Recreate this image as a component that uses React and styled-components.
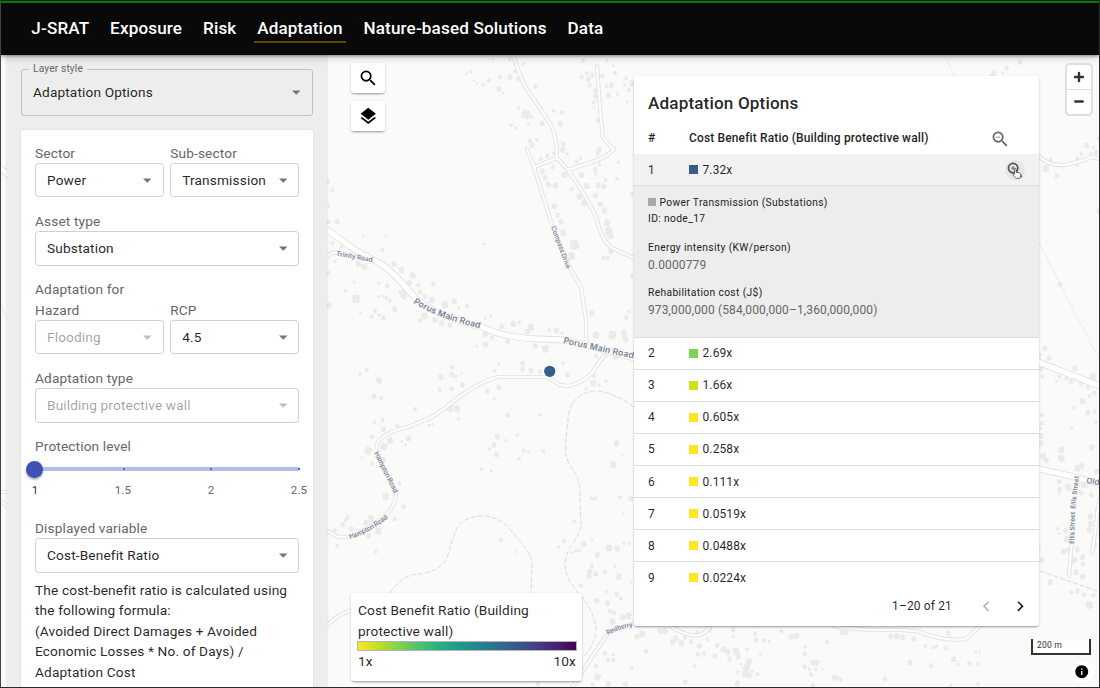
import React from "react";
import styled, { createGlobalStyle, css } from "styled-components";
import {
  MdSearch,
  MdLayers,
  MdZoomOut,
  MdZoomIn,
  MdChevronLeft,
  MdChevronRight,
  MdArrowDropDown,
  MdInfo,
} from "react-icons/md";

const GlobalStyle = createGlobalStyle`
  *, *::before, *::after { box-sizing: border-box; }
  body {
    margin: 0;
    font-family: Roboto, "Liberation Sans", sans-serif;
    font-size: 13.67px;
    line-height: 20.5px;
    letter-spacing: 0.14px;
    color: rgba(0, 0, 0, 0.87);
    overflow: hidden;
  }
`;

/* ---------- Shell ---------- */

const Shell = styled.div`
  width: 1100px;
  height: 688px;
  display: flex;
  flex-direction: column;
  overflow: hidden;
  border: 1px solid #2b2b2b;
  border-left-color: #444;
  border-top-color: #0a1a0a;
`;

const Header = styled.header`
  position: relative;
  z-index: 3;
  flex: none;
  height: 54px;
  border-top: 2px solid #007c05;
  background: #090909;
  box-shadow: 0 1px 3px rgba(0, 0, 0, 0.4), 0 3px 8px rgba(0, 0, 0, 0.16);
  display: flex;
  align-items: center;
  gap: 14.8px;
  padding: 0 27.3px 1.5px;
`;

const NavLink = styled.a`
  padding: 2px 3px 0;
  border-bottom: 2px solid ${(p) => (p.$active ? "#594800" : "transparent")};
  color: #fff;
  font-size: 17.09px;
  line-height: 25px;
  font-weight: 500;
  letter-spacing: 0.155px;
  white-space: nowrap;
`;

const Main = styled.main`
  position: relative;
  flex: 1;
  min-height: 0;
  display: flex;
  background: #fafaf9;
`;

const MapCanvas = styled.svg`
  position: absolute;
  left: -1px;
  top: -55px;
`;

/* ---------- Sidebar ---------- */

const Sidebar = styled.aside`
  position: relative;
  flex: none;
  width: 320px;
  margin-left: 6px;
  padding: 7px 14px 0;
  background: #ededed;
  box-shadow: 0 0 2px rgba(0, 0, 0, 0.16);
  display: flex;
  flex-direction: column;
  gap: 14px;
`;

const StyleSelect = styled.fieldset`
  height: 54px;
  flex: none;
  margin: 0;
  padding: 0 11px;
  min-width: 0;
  border: 1px solid #c1c1c1;
  border-radius: 3px;
  display: flex;
`;

const StyleLegend = styled.legend`
  padding: 0 4px;
  margin-left: -4px;
  font-size: 10.25px;
  line-height: 14px;
  letter-spacing: 0.12px;
  color: #666;
`;

const StyleValue = styled.div`
  display: flex;
  align-items: center;
  justify-content: space-between;
  width: 100%;
  height: 34px;
  margin-top: -1px;

  svg {
    margin-right: -5.5px;
    color: #757575;
  }
`;

const Card = styled.section`
  flex: 1;
  min-height: 0;
  padding: 12.7px 14px;
  border-radius: 3px 3px 0 0;
  background: #fff;
  box-shadow: 0 0 2px rgba(0, 0, 0, 0.12);
  display: flex;
  flex-direction: column;
  gap: 13.4px;
`;

const FieldRow = styled.div`
  display: grid;
  grid-template-columns: 1fr 1fr;
  gap: 6.5px;
`;

const Field = styled.div`
  display: flex;
  flex-direction: column;
`;

const Label = styled.div`
  color: #666;
  white-space: nowrap;
`;

const SelectBox = styled.div`
  display: flex;
  align-items: center;
  justify-content: space-between;
  height: 34.3px;
  padding: 0 5px 0 11px;
  border: 1px solid #d0d0d0;
  border-radius: 3.5px;
  color: ${(p) => (p.$disabled ? "rgba(0,0,0,0.38)" : "rgba(0,0,0,0.87)")};
  white-space: nowrap;

  svg {
    color: ${(p) => (p.$disabled ? "#bdbdbd" : "#757575")};
  }
`;

const SliderBlock = styled.div`
  height: 48px;
  padding-top: 10.9px;
`;

const Rail = styled.div`
  position: relative;
  width: 265px;
  height: 4px;
  border-radius: 2px;
  background: #b2bee4;
  display: flex;
  justify-content: space-between;
  align-items: center;
`;

const Tick = styled.span`
  width: 2px;
  height: 2px;
  border-radius: 1px;
  background: #3a4f9f;
`;

const Thumb = styled.span`
  position: absolute;
  left: -9px;
  top: -6.5px;
  width: 17.4px;
  height: 17.4px;
  border-radius: 50%;
  background: #3f51b5;
  box-shadow: 0 2px 2px rgba(0, 0, 0, 0.22), 0 1px 3px rgba(0, 0, 0, 0.15);
`;

const TickLabels = styled.div`
  display: flex;
  justify-content: space-between;
  width: 288px;
  margin: 11px 0 0 -12px;
  font-size: 11.5px;
  line-height: 17px;
  color: #666;

  span {
    width: 24px;
    text-align: center;
  }
  span:first-child {
    color: rgba(0, 0, 0, 0.87);
  }
`;

const Formula = styled.p`
  margin: 7px -10px 0 0;
  letter-spacing: 0.15px;
`;

/* ---------- Map overlays ---------- */

const floating = css`
  background: #fff;
  border-radius: 3px;
  box-shadow: 0 2px 2px -1px rgba(0, 0, 0, 0.26), 0 1px 3px rgba(0, 0, 0, 0.18);
`;

const LeftColumn = styled.div`
  position: relative;
  width: 231px;
  margin-left: 24px;
  padding: 8px 0 6.5px;
  display: flex;
  flex-direction: column;
  gap: 8px;
`;

const MapButton = styled.button`
  ${floating}
  width: 34px;
  height: 30px;
  padding: 0;
  border: 0;
  display: grid;
  place-items: center;
  color: #000;
`;

const Legend = styled.div`
  ${floating}
  margin-top: auto;
  height: 87.5px;
  padding: 7px 6px 6px 7px;
  letter-spacing: 0.16px;
`;

const Ramp = styled.div`
  height: 10px;
  width: 220px;
  margin: 0 0 0 -1px;
  border: 1px solid #b3b3b8;
  background: linear-gradient(
    90deg,
    #fde725,
    #c2df23 9%,
    #86d549 18%,
    #52c569 27%,
    #2ab07f 37%,
    #1e9b8a 46%,
    #25858e 55%,
    #2d708e 64%,
    #38588c 73%,
    #433e85 82%,
    #482173 91%,
    #440154
  );
`;

const RampLabels = styled.div`
  display: flex;
  justify-content: space-between;
`;

const Panel = styled.section`
  ${floating}
  position: relative;
  width: 405px;
  height: 549.5px;
  margin: 21px 0 0 52px;
  display: flex;
  flex-direction: column;
  font-size: 11.96px;
  letter-spacing: 0.14px;
`;

const PanelTitle = styled.h2`
  margin: 0;
  padding: 16.5px 14px 0;
  font-size: 17.09px;
  line-height: 20px;
  font-weight: 500;
  letter-spacing: 0.16px;
`;

const cells = css`
  flex: none;
  display: grid;
  grid-template-columns: 41px 1fr auto;
  align-items: center;
  padding: 1px 14px 0;
`;

const HeadRow = styled.div`
  ${cells}
  height: 41px;
  padding-right: 28.5px;
  padding-top: 11px;
  font-weight: 500;
  letter-spacing: 0.16px;
  color: #1f1f1f;

  svg {
    color: #666;
    margin-top: 2px;
  }
`;

const Row = styled.div`
  ${cells}
  height: ${(p) => (p.$active ? "32.5px" : "32.07px")};
  border-bottom: 1px solid ${(p) => (p.$last ? "transparent" : "#dedede")};
  background: ${(p) => (p.$active ? "#f2f2f2" : "transparent")};
`;

const Value = styled.div`
  display: flex;
  align-items: center;
  gap: 4.5px;
`;

const Swatch = styled.span`
  width: ${(p) => p.$size || 9}px;
  height: ${(p) => p.$size || 9}px;
  margin-bottom: 1px;
  background: ${(p) => p.$color};
`;

const HoverButton = styled.span`
  position: relative;
  width: 20.5px;
  height: 20.5px;
  border-radius: 50%;
  background: #e6e6e6;
  display: grid;
  place-items: center;
  color: #555;
`;

const Pointer = styled.svg`
  position: absolute;
  left: 7px;
  top: 8px;
`;

const Details = styled.div`
  flex: none;
  height: 151.5px;
  padding: 8.5px 14px;
  background: #ededed;
  border-bottom: 1px solid #dedede;
  font-size: 10.25px;
  line-height: 16.8px;
  letter-spacing: 0.36px;
`;

const DetailLine = styled.div`
  display: flex;
  align-items: center;
  gap: 3.5px;
  color: #222;
`;

const Measure = styled.div`
  margin-top: ${(p) => p.$gap || "12px"};
  color: #222;

  p {
    margin: 0;
    font-size: 11.96px;
    line-height: 17.5px;
    color: #666;
    letter-spacing: 0.15px;
  }
`;

const Pager = styled.div`
  flex: 1;
  display: flex;
  align-items: center;
  justify-content: flex-end;
  gap: 13.5px;
  padding: 0 8.5px 8px 0;

  span {
    margin-right: 10.5px;
    letter-spacing: 0.16px;
  }
`;

const RightColumn = styled.div`
  position: relative;
  flex: 1;
  display: flex;
  flex-direction: column;
  align-items: flex-end;
  padding: 7.5px 6.5px 1px 0;
`;

const ZoomControl = styled.div`
  width: 28px;
  height: 53px;
  border: 2px solid #dfdfdf;
  border-radius: 4.5px;
  background: #fff;
  display: flex;
  flex-direction: column;

  svg + svg {
    border-top: 1px solid #ddd;
  }
`;

const ScaleBar = styled.div`
  width: 60px;
  height: 16px;
  margin: auto 1.5px 6px -20px;
  border: 2px solid #333;
  border-top: 0;
  background: rgba(255, 255, 255, 0.75);
  padding: 0 0 0 4px;
  font-size: 8.6px;
  line-height: 13px;
  color: #333;
`;

const InfoButton = styled.div`
  width: 22px;
  height: 22px;
  margin-bottom: 3px;
  border-radius: 50%;
  background: #fff;
  display: grid;
  place-items: center;
  color: #000;
`;

/* ---------- Map drawing ---------- */

/* Every sheet holds footprints as x, y, size triples in thirds of a pixel. */
const sheets = [
  {
    x: 325,
    y: 55,
    b: [
      425, 56, 6, 437, 50, 8, 447, 76, 6, 456, 84, 6, 474, 90, 9, 492, 76, 11, 526, 66, 12, 522, 102, 13, 533, 113, 6, 555, 66, 13,
      570, 48, 11, 580, 72, 11, 594, 28, 9, 632, 94, 12, 555, 14, 8, 505, 13, 5, 580, 158, 8, 602, 178, 24, 618, 185, 10, 610, 206, 7,
      558, 211, 9, 572, 219, 7, 652, 206, 13, 686, 168, 9, 711, 172, 10, 705, 206, 14, 615, 258, 12, 622, 272, 14, 635, 254, 9,
      715, 267, 11, 713, 284, 16, 727, 297, 8, 687, 295, 9, 667, 303, 10, 647, 312, 10, 684, 337, 10, 756, 320, 10, 767, 309, 8,
      822, 285, 14, 818, 297, 10, 880, 322, 9, 824, 328, 8, 811, 344, 13, 812, 358, 8, 770, 360, 13, 718, 360, 16, 652, 349, 13,
      661, 368, 12, 670, 388, 15, 692, 392, 15, 741, 402, 11, 785, 393, 15, 820, 392, 14, 837, 395, 14, 842, 374, 9, 876, 371, 10,
      920, 418, 11, 764, 425, 16, 778, 444, 16, 811, 422, 14, 826, 448, 14, 838, 467, 15, 847, 503, 18, 850, 528, 20, 856, 540, 20,
      688, 454, 14, 698, 481, 12, 708, 500, 14, 715, 533, 17, 750, 570, 22, 774, 17, 10, 846, 17, 8, 770, 66, 11, 786, 54, 9, 790, 73, 13,
      801, 60, 11, 794, 90, 10, 811, 107, 12, 811, 124, 11, 806, 142, 9, 807, 157, 7, 818, 197, 10, 844, 94, 9, 859, 90, 13, 850, 121, 13,
      878, 118, 8, 832, 64, 10, 870, 54, 10, 903, 70, 9, 899, 90, 8, 912, 104, 11, 920, 85, 15, 906, 141, 6, 10, 379, 10, 22, 406, 9,
      11, 454, 7, 10, 500, 11, 37, 500, 13, 115, 543, 7, 182, 543, 6, 477, 567, 6, 866, 32, 7,
    ],
  },
  {
    x: 325,
    y: 240,
    b: [
      30, 65, 8, 10, 98, 10, 12, 197, 14, 87, 126, 6, 61, 153, 8, 93, 176, 22, 118, 80, 17, 100, 72, 15, 106, 218, 7, 140, 230, 11,
      150, 212, 10, 176, 234, 13, 162, 225, 8, 209, 208, 14, 195, 183, 9, 184, 173, 9, 174, 168, 6, 161, 170, 6, 162, 129, 7, 187, 138, 12,
      207, 72, 13, 230, 90, 15, 263, 106, 16, 253, 128, 13, 280, 136, 10, 232, 160, 20, 238, 172, 12, 325, 131, 11, 285, 156, 12,
      300, 170, 10, 320, 180, 16, 360, 195, 18, 388, 184, 14, 402, 203, 8, 426, 199, 10, 285, 241, 11, 298, 228, 17, 330, 240, 15,
      350, 250, 14, 375, 255, 12, 480, 235, 7, 497, 228, 6, 455, 319, 6, 481, 283, 14, 502, 293, 10, 482, 314, 14, 548, 305, 12,
      530, 260, 12, 565, 252, 15, 584, 248, 8, 618, 262, 18, 607, 275, 14, 673, 270, 9, 694, 271, 15, 711, 280, 8, 631, 318, 13,
      662, 326, 20, 715, 370, 9, 728, 405, 13, 593, 370, 12, 593, 388, 12, 618, 392, 14, 644, 396, 11, 521, 372, 8, 510, 392, 9,
      522, 442, 14, 487, 454, 11, 508, 475, 7, 382, 382, 12, 380, 404, 14, 392, 410, 8, 347, 411, 15, 412, 435, 13, 410, 400, 5,
      380, 446, 12, 344, 449, 10, 125, 390, 11, 105, 401, 9, 162, 422, 16, 147, 469, 13, 169, 474, 11, 270, 508, 10, 375, 504, 20,
      396, 506, 17, 400, 537, 7, 548, 525, 12, 645, 525, 8, 148, 547, 9, 173, 541, 10, 176, 569, 13, 218, 558, 10, 313, 556, 8, 323, 553, 5,
      517, 590, 10, 577, 585, 7, 800, 220, 14, 813, 285, 18, 862, 285, 22, 896, 280, 16, 902, 298, 16, 904, 232, 11, 912, 216, 8,
      920, 110, 9, 747, 14, 24, 740, 48, 19, 835, 54, 10, 848, 55, 11, 858, 34, 14, 805, 430, 16, 822, 435, 8, 843, 423, 9, 783, 447, 6,
      808, 408, 10, 872, 350, 14, 477, 12, 6, 855, 15, 5, 813, 348, 9, 172, 30, 10, 22, 10, 9, 80, 16, 11, 50, 20, 9,
    ],
  },
  {
    x: 325,
    y: 430,
    b: [
      142, 20, 11, 195, 32, 16, 177, 50, 18, 130, 62, 20, 110, 83, 6, 141, 101, 9, 176, 90, 12, 250, 25, 15, 230, 34, 6, 242, 43, 7,
      223, 160, 10, 182, 200, 17, 236, 230, 12, 209, 267, 11, 68, 261, 10, 62, 270, 10, 53, 284, 12, 78, 297, 13, 30, 300, 9, 37, 347, 9,
      138, 266, 18, 122, 278, 13, 160, 303, 18, 131, 318, 13, 152, 365, 9, 517, 20, 14, 507, 45, 13, 494, 56, 8, 515, 74, 13, 543, 32, 8,
      577, 15, 8, 596, 62, 10, 583, 86, 9, 610, 66, 7, 655, 63, 10, 470, 117, 9, 499, 122, 7, 528, 330, 10, 571, 366, 6, 701, 352, 7,
      717, 333, 11, 741, 368, 7, 752, 363, 8, 763, 362, 9, 748, 274, 10, 776, 342, 15, 801, 328, 7, 817, 375, 14, 800, 205, 9, 811, 205, 10,
      884, 202, 10, 918, 206, 14, 875, 40, 15, 865, 104, 17, 896, 250, 5, 893, 76, 5, 852, 354, 18, 876, 356, 15, 897, 340, 8, 912, 340, 8,
      800, 407, 11, 794, 425, 14, 792, 438, 14, 812, 432, 13, 840, 426, 10, 870, 409, 8, 882, 440, 16, 917, 457, 7, 767, 467, 11,
      845, 484, 8, 876, 494, 12, 888, 506, 10, 816, 513, 14, 848, 520, 13, 855, 544, 12, 867, 548, 11, 893, 562, 14, 910, 558, 18,
      862, 575, 16, 840, 670, 12, 850, 690, 11, 865, 690, 10, 864, 675, 8, 813, 708, 10, 818, 741, 17, 803, 764, 11, 850, 764, 15, 902, 762, 14,
      640, 762, 11, 634, 751, 10, 920, 715, 10,
    ],
  },
  {
    x: 630,
    y: 440,
    b: [
      20, 590, 14, 48, 634, 11, 36, 582, 17, 90, 574, 14, 105, 572, 16, 138, 595, 15, 128, 606, 14, 155, 610, 15, 165, 593, 10, 208, 618, 14,
      204, 643, 12, 222, 640, 11, 193, 678, 8, 238, 570, 14, 232, 598, 9, 262, 616, 11, 255, 648, 13, 280, 628, 13, 293, 636, 14, 299, 657, 12,
      318, 634, 18, 325, 650, 14, 310, 570, 12, 310, 590, 8, 352, 628, 10, 358, 664, 16, 350, 682, 20, 345, 702, 17, 358, 706, 13,
      322, 697, 10, 382, 703, 9, 392, 643, 8, 378, 600, 13, 376, 580, 10, 402, 602, 11, 418, 604, 8, 454, 574, 10, 484, 590, 14, 500, 588, 14,
      526, 620, 9, 524, 642, 12, 550, 668, 14, 562, 668, 12, 524, 680, 11, 538, 688, 8, 558, 688, 9, 578, 688, 5, 543, 704, 11, 549, 736, 12,
      612, 713, 13, 620, 714, 12, 632, 720, 9, 592, 607, 10, 638, 578, 14, 650, 578, 10, 782, 589, 13, 800, 590, 15, 818, 592, 14,
      852, 597, 13, 886, 617, 9, 910, 622, 10, 920, 619, 8, 947, 624, 11, 840, 668, 13, 903, 677, 12, 971, 658, 14, 984, 674, 8,
      1018, 670, 12, 1038, 636, 7, 1050, 638, 6, 1044, 672, 9, 955, 580, 11, 765, 717, 12, 166, 726, 12, 322, 731, 15, 963, 735, 8,
      1044, 731, 9, 200, 575, 8, 183, 605, 11, 333, 672, 7, 366, 694, 7,
    ],
  },
  {
    x: 1000,
    y: 440,
    b: [
      122, 10, 14, 130, 50, 17, 140, 62, 12, 184, 30, 16, 184, 55, 18, 275, 22, 15, 245, 78, 15, 232, 85, 17, 178, 125, 12, 178, 148, 12,
      178, 160, 7, 205, 142, 18, 253, 133, 20, 274, 165, 11, 244, 160, 11, 172, 266, 8, 178, 282, 6, 197, 272, 13, 200, 297, 16,
      190, 335, 14, 203, 330, 12, 272, 230, 16, 272, 252, 16, 268, 270, 14, 232, 328, 14, 224, 360, 14, 248, 352, 14, 248, 373, 12,
      228, 397, 14, 212, 370, 13, 248, 410, 14, 151, 427, 14, 124, 360, 14, 118, 328, 9, 214, 457, 9, 232, 453, 12, 251, 464, 12, 280, 466, 11,
      268, 495, 20, 285, 315, 12, 290, 95, 14, 292, 210, 14,
    ],
  },
  {
    x: 1000,
    y: 180,
    b: [
      135, 505, 12, 147, 534, 13, 120, 525, 10, 124, 567, 13, 127, 590, 9, 180, 313, 13, 225, 565, 13, 278, 590, 18, 178, 590, 9, 169, 604, 7,
      199, 595, 11, 213, 605, 13, 243, 612, 11, 265, 622, 11, 283, 640, 12, 269, 648, 9, 248, 664, 15, 221, 684, 8, 264, 698, 13,
      284, 695, 8, 215, 746, 8, 287, 727, 9, 124, 706, 10, 126, 730, 11, 124, 768, 14, 122, 745, 8, 296, 92, 11,
    ],
  },
  {
    x: 860,
    y: 60,
    b: [
      402, 38, 14, 440, 24, 11, 428, 38, 5, 480, 6, 12, 396, 46, 9, 573, 300, 9, 558, 326, 18, 591, 348, 12, 652, 296, 9, 653, 317, 7,
      664, 282, 9, 680, 256, 13, 700, 262, 8, 708, 278, 13, 715, 235, 8, 715, 455, 10, 692, 280, 7,
    ],
  },
];

const roads = [
  "M513 55 L520 75 L527 90 Q545 115 552 127 Q557 138 557 158 L568 170 Q592 205 597 220 Q602 241 612 248 L634 258 L640 262",
  "M597 66 L599 95 Q601 122 603 137 Q608 145 614 149 Q608 157 592 162 L568 170",
  "M557 158 L534 167",
  "M527 149 L534 167 L552 225 L570 268 L581 287 L586 320 L586 342",
  "M327 257 Q332 251 337 253 L372 260",
  "M605 355 Q598 363 592 373 Q582 383 568 386 L560 385 L547 377 L498 377 Q478 383 462 395 Q445 408 432 417 Q418 423 408 427 Q385 432 378 442 Q374 452 379 460 L396 493 Q395 510 380 520 Q362 533 348 537 L338 537 L326 530",
  "M326 626 L337 617 Q345 612 352 610",
  "M640 622 Q615 627 606 636 L582 672 L570 690",
  "M670 626 Q700 645 710 626",
  "M835 627 L870 630 Q905 629 920 632 Q945 642 966 639 L980 626",
  "M1039 156 Q1048 166 1065 165 Q1080 162 1092 157 L1100 159",
  "M1073 525 L1069 576",
  "M1099 500 Q1095 535 1092 553",
  "M0 492 L8 492",
  "M0 500 L8 507",
];

const highways = [
  "M320 225 L340 239 L355 250 L383 265 Q398 277 415 298 Q438 317 482 327 Q505 338 538 339 L565 340 Q598 348 634 358",
  "M1038 362 L1100 386",
  "M1038 469 Q1065 474 1100 484",
  "M-2 167 L12 177",
];

const tracks = [
  "M634 407 Q612 391 595 391 Q570 393 568 420 L566 440 Q563 457 573 470 Q581 480 580 497 L581 527 Q578 537 570 547 Q562 563 567 575 Q572 587 582 597 Q597 617 596 633 Q593 648 583 657",
  "M390 593 Q402 575 418 574 Q438 573 447 558 Q453 537 457 528 Q465 516 483 516 Q502 517 512 532 Q532 553 532 563 L531 593",
  "M1040 571 L1100 592",
];

const streets = [
  { id: "trinity", d: "M336 255.500 L375 262.500", len: 37, size: 6.6, text: "Trinity Road" },
  { id: "porusWest", d: "M413 303 Q440 320 484 329", len: 72, size: 8.7, text: "Porus Main Road" },
  { id: "porusEast", d: "M563 343 Q598 351 636 359", len: 72, size: 8.7, text: "Porus Main Road" },
  { id: "compass", d: "M551 227 L567 270", len: 45, size: 6.6, text: "Compass Drive" },
  { id: "hamptonN", d: "M374 453 L396 497", len: 45, size: 6.8, text: "Hampton Road" },
  { id: "hamptonS", d: "M350 539 Q368 534 391 516", len: 44, size: 6.8, text: "Hampton Road" },
  { id: "redberry", d: "M608 635 Q618 629 636 626", len: 27, size: 6.6, text: "Redberry" },
  { id: "ellisN", d: "M1075 509 L1079 476", len: 33, size: 6.6, text: "Ellis Street" },
  { id: "ellisS", d: "M1074 544 L1075 512", len: 32, size: 6.6, text: "Ellis Street" },
  { id: "old", d: "M1086 483 L1104 486", len: 13, size: 8, text: "Old" },
];

function footprints(list) {
  const out = [];
  for (let i = 0; i < list.length; i += 3) {
    const [x, y, s] = [list[i], list[i + 1], list[i + 2]];
    const w = s * 0.86;
    const turn = ((x * 7 + y * 3) % 50) - 25;
    out.push(
      <rect key={i} x={x - w / 2} y={y - s / 2} width={w} height={s} rx="2" transform={`rotate(${turn} ${x} ${y})`} />
    );
  }
  return out;
}

function BaseMap() {
  return (
    <MapCanvas width="1100" height="688" viewBox="0 0 1100 688" fill="none">
      {sheets.map((s, i) => (
        <g key={i} transform={`translate(${s.x} ${s.y}) scale(0.3333)`} fill="#ebebea" stroke="#e5e5e5" strokeWidth="1.6">
          {footprints(s.b)}
        </g>
      ))}
      <g stroke="#dadad9" strokeWidth="1" strokeDasharray="5 2">
        {tracks.map((d) => <path key={d} d={d} />)}
      </g>
      <g stroke="#d9d6cf" strokeWidth="0.7" strokeDasharray="1.5 1.2">
        <path d="M1039 243 L1100 361" />
        <path d="M946 58 L955 77" />
        <path d="M1 305 L8 322" />
      </g>
      <g strokeLinecap="round" strokeLinejoin="round">
        <g stroke="#e0e0df" strokeWidth="4.2">{roads.map((d) => <path key={d} d={d} />)}</g>
        <g stroke="#dfdfde" strokeWidth="6.8">{highways.map((d) => <path key={d} d={d} />)}</g>
        <g stroke="#fcfcfb" strokeWidth="2.5">{roads.map((d) => <path key={d} d={d} />)}</g>
        <g stroke="#ffffff" strokeWidth="5.200">{highways.map((d) => <path key={d} d={d} />)}</g>
      </g>
      {streets.map((s) => (
        <g key={s.id}>
          <path id={s.id} d={s.d} />
          <text
            fontFamily="Inter, 'Open Sans', sans-serif"
            fontWeight="600"
            fontSize={s.size}
            letterSpacing="0"
            fill="#758293"
            stroke="#fafaf9"
            strokeWidth="1.2"
            paintOrder="stroke"
          >
            <textPath href={`#${s.id}`} textLength={s.len}>{s.text}</textPath>
          </text>
        </g>
      ))}
      <circle cx="549.7" cy="371.3" r="5.6" fill="#355e8d" />
    </MapCanvas>
  );
}

/* ---------- Data ---------- */

const links = ["J-SRAT", "Exposure", "Risk", "Adaptation", "Nature-based Solutions", "Data"];

const rows = [
  [2, "2.69x", "#7ed34f"],
  [3, "1.66x", "#cfe11c"],
  [4, "0.605x", "#fde725"],
  [5, "0.258x", "#fde725"],
  [6, "0.111x", "#fde725"],
  [7, "0.0519x", "#fde725"],
  [8, "0.0488x", "#fde725"],
  [9, "0.0224x", "#fde725"],
];

function Select({ label, value, disabled }) {
  return (
    <Field>
      <Label>{label}</Label>
      <SelectBox $disabled={disabled}>
        {value}
        <MdArrowDropDown size={20.5} />
      </SelectBox>
    </Field>
  );
}

export default function App() {
  return (
    <Shell>
      <GlobalStyle />
      <Header>
        {links.map((name) => (
          <NavLink key={name} $active={name === "Adaptation"}>{name}</NavLink>
        ))}
      </Header>
      <Main>
        <BaseMap />
        <Sidebar>
          <StyleSelect>
            <StyleLegend>Layer style</StyleLegend>
            <StyleValue>
              Adaptation Options
              <MdArrowDropDown size={20.5} />
            </StyleValue>
          </StyleSelect>
          <Card>
            <FieldRow>
              <Select label="Sector" value="Power" />
              <Select label="Sub-sector" value="Transmission" />
            </FieldRow>
            <Select label="Asset type" value="Substation" />
            <div>
              <Label>Adaptation for</Label>
              <FieldRow>
                <Select label="Hazard" value="Flooding" disabled />
                <Select label="RCP" value="4.5" />
              </FieldRow>
            </div>
            <Select label="Adaptation type" value="Building protective wall" disabled />
            <div>
              <Label>Protection level</Label>
              <SliderBlock>
                <Rail>
                  <Tick /><Tick /><Tick /><Tick />
                  <Thumb />
                </Rail>
                <TickLabels>
                  <span>1</span><span>1.5</span><span>2</span><span>2.5</span>
                </TickLabels>
              </SliderBlock>
            </div>
            <div>
              <Select label="Displayed variable" value="Cost-Benefit Ratio" />
              <Formula>
                The cost-benefit ratio is calculated using<br />
                the following formula:<br />
                (Avoided Direct Damages + Avoided<br />
                Economic Losses * No. of Days) /<br />
                Adaptation Cost
              </Formula>
            </div>
          </Card>
        </Sidebar>
        <LeftColumn>
          <MapButton><MdSearch size={20.5} /></MapButton>
          <MapButton><MdLayers size={20.5} /></MapButton>
          <Legend>
            Cost Benefit Ratio (Building<br />protective wall)
            <Ramp />
            <RampLabels><span>1x</span><span>10x</span></RampLabels>
          </Legend>
        </LeftColumn>
        <Panel>
          <PanelTitle>Adaptation Options</PanelTitle>
          <HeadRow>
            <span>#</span>
            <span>Cost Benefit Ratio (Building protective wall)</span>
            <MdZoomOut size={20.5} />
          </HeadRow>
          <Row $active>
            <span>1</span>
            <Value><Swatch $color="#355e8d" />7.32x</Value>
            <HoverButton>
              <MdZoomIn size={20.5} />
              <Pointer width="10" height="11" viewBox="0 0 20 22">
                <path
                  d="M5 2.5c0-2 3-2 3 0V9l1.500-.5 1.500.8 1.800-.3 1.400 1 1.800 0 1.500 1.500v4L16 20.500H8L2 13.500c-1-1.500.8-2.700 2-1.500l1 .8z"
                  fill="#fff"
                  stroke="#333"
                  strokeWidth="1.3"
                />
              </Pointer>
            </HoverButton>
          </Row>
          <Details>
            <DetailLine><Swatch $size={8} $color="#a9a9a9" />Power Transmission (Substations)</DetailLine>
            <DetailLine>ID: node_17</DetailLine>
            <Measure>Energy intensity (KW/person)<p>0.0000779</p></Measure>
            <Measure $gap="10.5px">Rehabilitation cost (J$)<p>973,000,000 (584,000,000–1,360,000,000)</p></Measure>
          </Details>
          {rows.map(([n, value, color]) => (
            <Row key={n} $last={n === 9}>
              <span>{n}</span>
              <Value><Swatch $color={color} />{value}</Value>
            </Row>
          ))}
          <Pager>
            <span>1–20 of 21</span>
            <MdChevronLeft size={20.5} color="#b5b5b5" />
            <MdChevronRight size={20.5} color="#222" />
          </Pager>
        </Panel>
        <RightColumn>
          <ZoomControl>
            <svg width="24" height="24" viewBox="0 0 24 24" stroke="#333" strokeWidth="2.4" strokeLinecap="round">
              <path d="M8 12h8M12 8v8" />
            </svg>
            <svg width="24" height="25" viewBox="0 0 24 25" stroke="#333" strokeWidth="2.6" strokeLinecap="round">
              <path d="M8.200 12h7.600" />
            </svg>
          </ZoomControl>
          <ScaleBar>200 m</ScaleBar>
          <InfoButton><MdInfo size={15.5} /></InfoButton>
        </RightColumn>
      </Main>
    </Shell>
  );
}
